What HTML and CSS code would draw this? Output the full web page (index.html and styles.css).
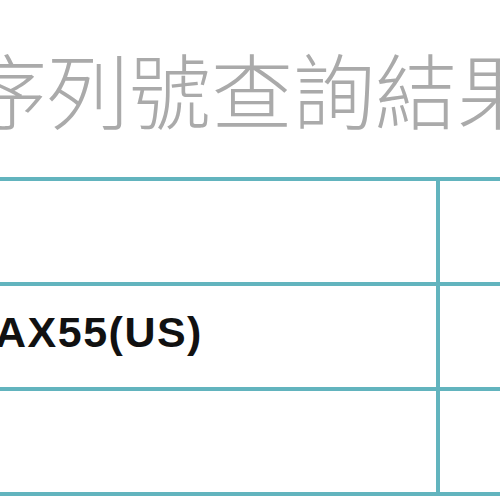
FILE: index.html
```html
<!DOCTYPE html>
<html lang="zh-Hant">
<head>
<meta charset="utf-8">
<link rel="stylesheet" href="styles.css">
</head>
<body>
<div class="page">
  <div class="title">序列號查詢結果</div>
  <div class="grid">
    <div class="cell"></div>
    <div class="cell"></div>
    <div class="cell model"><span>AX55(US)</span></div>
    <div class="cell"></div>
    <div class="cell"></div>
    <div class="cell"></div>
  </div>
</div>
</body>
</html>
```

FILE: styles.css
```css
html, body {
  margin: 0;
  padding: 0;
  background: #fff;
  overflow: hidden;
}
.page {
  width: 500px;
  height: 500px;
  overflow: hidden;
}
.title {
  margin: 47px 0 0 -35px;
  height: 82px;
  line-height: 82px;
  font-family: "Noto Sans CJK TC", "Noto Sans CJK SC", sans-serif;
  font-weight: 300;
  font-size: 82px;
  color: #aaaaaa;
  white-space: nowrap;
}
.grid {
  margin: 48px 0 0 -20px;
  width: 700px;
  display: grid;
  grid-template-columns: 456px 1fr;
  grid-auto-rows: 101px;
  gap: 4px;
  padding: 4px 0;
  background: #62b4be;
}
.cell {
  background: #fff;
  display: flex;
  align-items: center;
}
.model span {
  margin-left: 15px;
  margin-top: -8px;
  font-family: "Liberation Sans", Arial, sans-serif;
  font-weight: bold;
  font-size: 43px;
  letter-spacing: 1.5px;
  color: #111;
  white-space: nowrap;
}
```
